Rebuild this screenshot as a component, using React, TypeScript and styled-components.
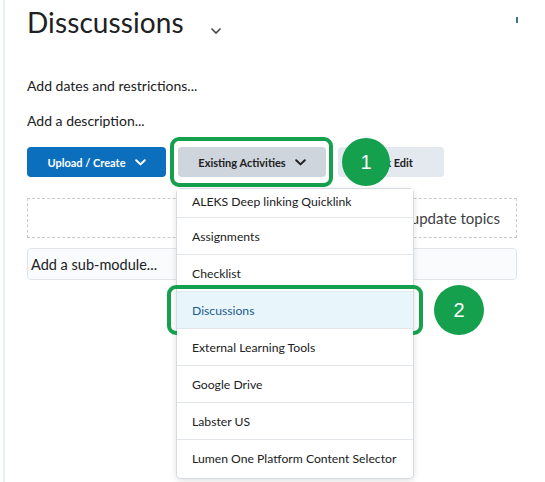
import React from 'react'
import styled, { createGlobalStyle } from 'styled-components'

const GlobalStyle = createGlobalStyle`
  html, body {
    margin: 0;
    padding: 0;
    background: #ffffff;
    font-family: Lato, "Open Sans", "Liberation Sans", sans-serif;
    color: #202122;
  }
`

const GREEN = '#14a04c'

const Frame = styled.div`
  margin-left: 3px;
  border-left: 2px solid #e9f0f2;
  min-height: 482px;
  box-sizing: border-box;
  padding: 4px 28px 0 22px;
`

const Header = styled.div`
  display: flex;
  align-items: flex-start;
  justify-content: space-between;
`

const TitleRow = styled.div`
  display: flex;
  align-items: center;
  gap: 26px;
`

const Title = styled.h1`
  margin: 0;
  font-size: 28px;
  font-weight: 400;
  line-height: 36px;
  letter-spacing: 0.1px;
`

const TitleChevron = styled.svg`
  margin-top: 18px;
`

const Marker = styled.span`
  display: block;
  width: 2px;
  height: 6px;
  margin: 13px -1px 0 0;
  background: #3f7585;
`

const Links = styled.div`
  display: flex;
  flex-direction: column;
  gap: 21px;
  margin-top: 39px;
  font-size: 14px;
  line-height: 14px;
`

const Toolbar = styled.div`
  display: flex;
  gap: 12px;
  margin-top: 19px;
`

const Button = styled.button<{ $tone: 'primary' | 'grey' | 'light'; $w: number }>`
  display: flex;
  align-items: center;
  justify-content: center;
  gap: 9px;
  width: ${p => p.$w}px;
  height: 30px;
  border: none;
  border-radius: 4px;
  font-family: Lato, "Liberation Sans", sans-serif;
  font-size: 11px;
  font-weight: 700;
  padding: 0;
  background: ${p => (p.$tone === 'primary' ? '#0b6fbe' : p.$tone === 'grey' ? '#cfd5dc' : '#e4e9f0')};
  color: ${p => (p.$tone === 'primary' ? '#ffffff' : '#202122')};
`

const Anchor = styled.div`
  position: relative;
`

const Outline = styled.div<{ $inset: string }>`
  position: absolute;
  inset: ${p => p.$inset};
  border: 4px solid ${GREEN};
  border-radius: 9px;
  pointer-events: none;
`

const Badge = styled.div<{ $left: number; $top: number; $size: number }>`
  position: absolute;
  left: ${p => p.$left}px;
  top: ${p => p.$top}px;
  width: ${p => p.$size}px;
  height: ${p => p.$size}px;
  border-radius: 50%;
  background: ${GREEN};
  color: #ffffff;
  display: flex;
  align-items: center;
  justify-content: center;
  font-family: "Liberation Sans", Arial, sans-serif;
  font-size: 20px;
  z-index: 3;
`

const Menu = styled.ul`
  position: absolute;
  top: 41px;
  left: -2px;
  width: 238px;
  margin: 0;
  padding: 0 0 2px;
  list-style: none;
  background: #ffffff;
  border: 1px solid #d6dbe1;
  border-radius: 5px;
  box-shadow: 0 2px 6px rgba(0, 0, 0, 0.12);
  z-index: 2;
  box-sizing: border-box;
`

const Item = styled.li<{ $active?: boolean; $first?: boolean }>`
  position: relative;
  display: flex;
  align-items: center;
  height: ${p => (p.$first ? 25 : 36)}px;
  padding: ${p => (p.$first ? '0 0 3px 15px' : '0 0 0 15px')};
  border-bottom: 1px solid #e3e6ea;
  font-size: 12.2px;
  background: ${p => (p.$active ? '#e8f6fc' : '#ffffff')};
  color: ${p => (p.$active ? '#1d5b8d' : '#202122')};

  &:last-child {
    border-bottom: none;
  }
`

const DropZone = styled.div`
  display: flex;
  align-items: center;
  justify-content: flex-end;
  height: 38px;
  margin-top: 21px;
  padding-right: 16px;
  border: 1px dashed #c6cacf;
  font-size: 15px;
  color: #3e4143;
`

const SubModule = styled.div`
  display: flex;
  align-items: center;
  height: 30px;
  margin-top: 10px;
  padding-left: 3px;
  border: 1px solid #e1e5e9;
  border-radius: 4px;
  background: #f9fbfd;
  font-size: 14.5px;
`

const Chevron = ({ color }: { color: string }) => (
  <svg width="11" height="7" viewBox="0 0 11 7">
    <path d="M1.2 1.2 L5.5 5.4 L9.8 1.2" fill="none" stroke={color} strokeWidth="2" strokeLinecap="round" strokeLinejoin="round" />
  </svg>
)

const tools = [
  'Assignments',
  'Checklist',
  'Discussions',
  'External Learning Tools',
  'Google Drive',
  'Labster US',
  'Lumen One Platform Content Selector',
]

const App = () => {
  return (
    <>
      <GlobalStyle />
      <Frame>
        <Header>
          <TitleRow>
            <Title>Disscussions</Title>
            <TitleChevron width="12" height="8" viewBox="0 0 12 8">
              <path d="M2 2 L6 6 L10 2" fill="none" stroke="#494c4e" strokeWidth="1.7" strokeLinecap="round" />
            </TitleChevron>
          </TitleRow>
          <Marker />
        </Header>

        <Links>
          <span>Add dates and restrictions...</span>
          <span>Add a description...</span>
        </Links>

        <Toolbar>
          <Button $tone="primary" $w={139}>
            Upload / Create <Chevron color="#ffffff" />
          </Button>
          <Anchor>
            <Button $tone="grey" $w={148}>
              Existing Activities <Chevron color="#202122" />
            </Button>
            <Outline $inset="-10px -7px -10px -8px" />
            <Badge $left={164} $top={-9} $size={48}>1</Badge>
            <Menu>
              <Item $first>ALEKS Deep linking Quicklink</Item>
              {tools.map(t => (
                <Item key={t} $active={t === 'Discussions'}>
                  {t}
                  {t === 'Discussions' && (
                    <>
                      <Outline $inset="-7px -10px -7px -10px" />
                      <Badge $left={257} $top={-7} $size={50}>2</Badge>
                    </>
                  )}
                </Item>
              ))}
            </Menu>
          </Anchor>
          <Button $tone="light" $w={106}>Bulk Edit</Button>
        </Toolbar>

        <DropZone>Drop files here to create and update topics</DropZone>
        <SubModule>Add a sub-module...</SubModule>
      </Frame>
    </>
  )
}

export default App
